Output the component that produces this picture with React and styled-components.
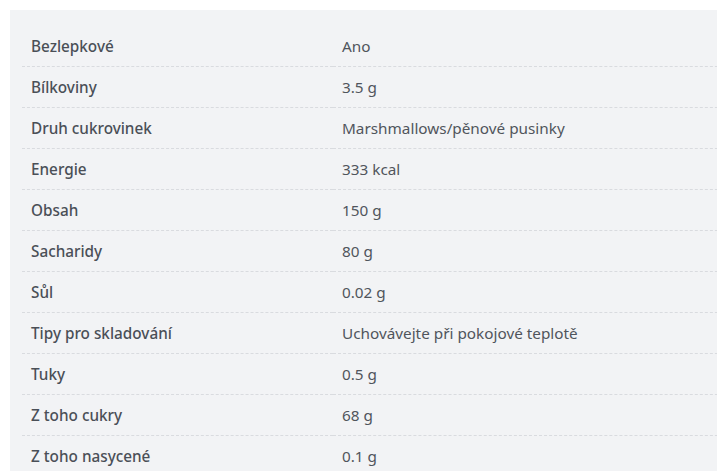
import React from "react";
import styled, { createGlobalStyle } from "styled-components";

const Global = createGlobalStyle`
  html, body { margin: 0; padding: 0; background: #ffffff; overflow: hidden; }
  body { padding: 10px 0 0 10px; font-family: "Noto Sans", "Open Sans", sans-serif; }
`;

const Panel = styled.section`
  width: 740px;
  background: #f2f3f5;
  padding: 16px 12px 0 12px;
  box-sizing: border-box;
`;

const Table = styled.div`
  display: grid;
  grid-template-columns: 311px 1fr;
`;

const Row = styled.div`
  display: contents;
`;

const Cell = styled.div`
  height: 40px;
  display: flex;
  align-items: center;
  padding-left: 9px;
  border-bottom: 1px dashed #d9dbdf;
  font-size: 15.3px;
  color: ${(p) => (p.$label ? "#4a4f57" : "#50555c")};
  font-weight: ${(p) => (p.$label ? 500 : 400)};
  white-space: nowrap;
`;

const rows = [
  ["Bezlepkové", "Ano"],
  ["Bílkoviny", "3.5 g"],
  ["Druh cukrovinek", "Marshmallows/pěnové pusinky"],
  ["Energie", "333 kcal"],
  ["Obsah", "150 g"],
  ["Sacharidy", "80 g"],
  ["Sůl", "0.02 g"],
  ["Tipy pro skladování", "Uchovávejte při pokojové teplotě"],
  ["Tuky", "0.5 g"],
  ["Z toho cukry", "68 g"],
  ["Z toho nasycené", "0.1 g"],
];

export default function App() {
  return (
    <>
      <Global />
      <Panel>
        <Table>
          {rows.map(([k, v]) => (
            <Row key={k}>
              <Cell $label>{k}</Cell>
              <Cell>{v}</Cell>
            </Row>
          ))}
        </Table>
      </Panel>
    </>
  );
}
